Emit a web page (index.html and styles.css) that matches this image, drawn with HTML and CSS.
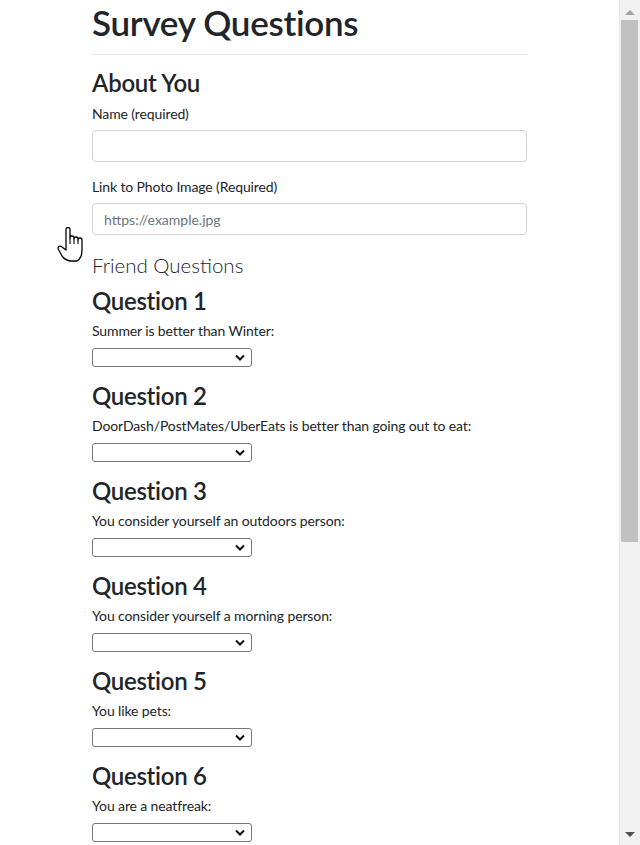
FILE: index.html
```html
<!DOCTYPE html>
<html lang="en">
<head>
<meta charset="utf-8">
<title>Survey Questions</title>
<link rel="stylesheet" href="styles.css">
</head>
<body>
<main class="container">
  <h1 class="title">Survey Questions</h1>
  <hr class="divider">
  <h2 class="section">About You</h2>
  <label class="field-label" for="name">Name (required)</label>
  <input class="text-input" id="name" type="text">
  <label class="field-label gap-top" for="photo">Link to Photo Image (Required)</label>
  <input class="text-input" id="photo" type="text" placeholder="https://example.jpg">
  <p class="lead">Friend Questions</p>

  <section class="question">
    <h3 class="q-title">Question 1</h3>
    <p class="q-label">Summer is better than Winter:</p>
    <div class="select-wrap"><select class="q-select"><option></option></select><svg class="chev" viewBox="0 0 10 6"><path d="M1 1l4 4 4-4" fill="none" stroke="#111" stroke-width="2"/></svg></div>
  </section>
  <section class="question">
    <h3 class="q-title">Question 2</h3>
    <p class="q-label">DoorDash/PostMates/UberEats is better than going out to eat:</p>
    <div class="select-wrap"><select class="q-select"><option></option></select><svg class="chev" viewBox="0 0 10 6"><path d="M1 1l4 4 4-4" fill="none" stroke="#111" stroke-width="2"/></svg></div>
  </section>
  <section class="question">
    <h3 class="q-title">Question 3</h3>
    <p class="q-label">You consider yourself an outdoors person:</p>
    <div class="select-wrap"><select class="q-select"><option></option></select><svg class="chev" viewBox="0 0 10 6"><path d="M1 1l4 4 4-4" fill="none" stroke="#111" stroke-width="2"/></svg></div>
  </section>
  <section class="question">
    <h3 class="q-title">Question 4</h3>
    <p class="q-label">You consider yourself a morning person:</p>
    <div class="select-wrap"><select class="q-select"><option></option></select><svg class="chev" viewBox="0 0 10 6"><path d="M1 1l4 4 4-4" fill="none" stroke="#111" stroke-width="2"/></svg></div>
  </section>
  <section class="question">
    <h3 class="q-title">Question 5</h3>
    <p class="q-label">You like pets:</p>
    <div class="select-wrap"><select class="q-select"><option></option></select><svg class="chev" viewBox="0 0 10 6"><path d="M1 1l4 4 4-4" fill="none" stroke="#111" stroke-width="2"/></svg></div>
  </section>
  <section class="question">
    <h3 class="q-title">Question 6</h3>
    <p class="q-label">You are a neatfreak:</p>
    <div class="select-wrap"><select class="q-select"><option></option></select><svg class="chev" viewBox="0 0 10 6"><path d="M1 1l4 4 4-4" fill="none" stroke="#111" stroke-width="2"/></svg></div>
  </section>
</main>

<div class="scrollbar" aria-hidden="true">
  <div class="sb-up"></div>
  <div class="sb-thumb"></div>
  <div class="sb-down"></div>
</div>

<svg class="cursor" viewBox="0 0 27 35" aria-hidden="true">
  <path d="M9,22 V2.5 A2,2 0 0 1 13,2.5 V11 A2,2 0 0 1 17,11 V12 A2,2 0 0 1 21,12 V13 A2,2 0 0 1 25,13 V23 Q25,31 20,34 H13 Q8,33 5,29 L1.5,22.5 A2,2 0 0 1 5,20 L9,23 Z" fill="#fff" stroke="#000" stroke-width="1.3" stroke-linejoin="round"/>
  <path d="M13,11 V17 M17,12 V17 M21,13 V17" fill="none" stroke="#000" stroke-width="1.1"/>
</svg>
</body>
</html>
```

FILE: styles.css
```css
html {
  overflow: hidden;
  height: 100%;
}
body {
  margin: 0;
  font-family: Lato, "Noto Sans", Arial, sans-serif;
  color: #212529;
  background: #fff;
  height: 100%;
  overflow: hidden;
}
.container {
  width: 435px;
  margin-left: 92px;
}
.title {
  margin: 0;
  font-size: 35px;
  line-height: 44px;
  font-weight: 600;
  letter-spacing: -0.3px;
}
.divider {
  margin: 10px 0 13px;
  border: 0;
  border-top: 1px solid rgba(0, 0, 0, 0.1);
}
.section {
  margin: 0 0 6px;
  font-size: 24px;
  line-height: 30px;
  font-weight: 600;
  letter-spacing: -0.3px;
}
.field-label {
  display: block;
  font-size: 14px;
  line-height: 20px;
  letter-spacing: -0.12px;
  margin-bottom: 6px;
}
.gap-top {
  margin-top: 15px;
}
.text-input {
  display: block;
  box-sizing: border-box;
  width: 100%;
  height: 32px;
  border: 1px solid #ced4da;
  border-radius: 4px;
  padding: 0 11px;
  font-family: inherit;
  font-size: 14px;
  color: #495057;
  outline: none;
}
.text-input::placeholder {
  color: #6c757d;
}
.lead {
  margin: 16px 0 7px;
  font-size: 20.5px;
  line-height: 28px;
  font-weight: 300;
  color: #212529;
}
.question {
  padding-bottom: 14px;
}
.q-title {
  margin: 0 0 5px;
  font-size: 24px;
  line-height: 30px;
  font-weight: 600;
  letter-spacing: -0.3px;
}
.q-label {
  margin: 0 0 7px;
  font-size: 14px;
  line-height: 20px;
  letter-spacing: -0.12px;
}
.select-wrap {
  position: relative;
  width: 160px;
  height: 19px;
}
.q-select {
  display: block;
  appearance: none;
  -webkit-appearance: none;
  box-sizing: border-box;
  width: 160px;
  height: 19px;
  border: 1px solid #767676;
  border-radius: 3px;
  background: #fff;
  margin: 0;
  padding: 0;
}
.chev {
  position: absolute;
  right: 7px;
  top: 6px;
  width: 10px;
  height: 7px;
  pointer-events: none;
}
.scrollbar {
  position: fixed;
  top: 0;
  right: 0;
  width: 21px;
  height: 845px;
  background: #f1f1f1;
  border-left: 1px solid #e9e9e9;
  box-sizing: border-box;
}
.sb-up {
  position: absolute;
  top: 10px;
  left: 5px;
  width: 0;
  height: 0;
  border-left: 5px solid transparent;
  border-right: 5px solid transparent;
  border-bottom: 5px solid #a3a3a3;
}
.sb-thumb {
  position: absolute;
  top: 20px;
  left: 1px;
  width: 17px;
  height: 522px;
  background: #c1c1c1;
}
.sb-down {
  position: absolute;
  bottom: 8px;
  left: 5px;
  width: 0;
  height: 0;
  border-left: 5px solid transparent;
  border-right: 5px solid transparent;
  border-top: 5px solid #505050;
}
.cursor {
  position: fixed;
  left: 57px;
  top: 227px;
  width: 27px;
  height: 35px;
}
```
